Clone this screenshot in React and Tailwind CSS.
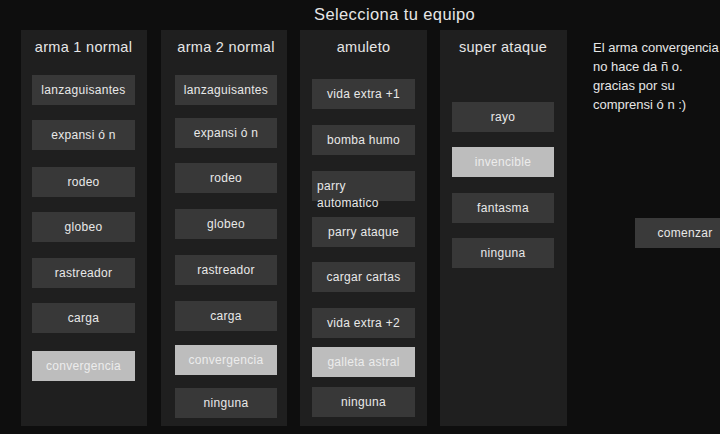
import React from "react";

const columns = [
  {
    title: "arma 1 normal",
    box: "ml-[21px] w-[126px] pl-[11px] pr-[12px]",
    items: [
      { label: "lanzaguisantes", mt: "mt-[9px]" },
      { label: "expansi ó n", mt: "mt-[15px]" },
      { label: "rodeo", mt: "mt-[17px]" },
      { label: "globeo", mt: "mt-[15px]" },
      { label: "rastreador", mt: "mt-[16px]" },
      { label: "carga", mt: "mt-[15px]" },
      { label: "convergencia", mt: "mt-[18px]", active: true },
    ],
  },
  {
    title: "arma 2 normal",
    box: "ml-[14px] w-[126px] pl-[14px] pr-[10px]",
    items: [
      { label: "lanzaguisantes", mt: "mt-[9px]" },
      { label: "expansi ó n", mt: "mt-[13px]" },
      { label: "rodeo", mt: "mt-[15px]" },
      { label: "globeo", mt: "mt-[16px]" },
      { label: "rastreador", mt: "mt-[16px]" },
      { label: "carga", mt: "mt-[16px]" },
      { label: "convergencia", mt: "mt-[14px]", active: true },
      { label: "ninguna", mt: "mt-[13px]" },
    ],
  },
  {
    title: "amuleto",
    box: "ml-[13px] w-[127px] pl-[12px] pr-[12px]",
    items: [
      { label: "vida extra +1", mt: "mt-[13px]" },
      { label: "bomba humo", mt: "mt-[16px]" },
      { label: "parry automatico", mt: "mt-[16px]", wrap: true },
      { label: "parry ataque", mt: "mt-[16px]" },
      { label: "cargar cartas", mt: "mt-[15px]" },
      { label: "vida extra +2", mt: "mt-[16px]" },
      { label: "galleta astral", mt: "mt-[9px]", active: true },
      { label: "ninguna", mt: "mt-[10px]" },
    ],
  },
  {
    title: "super ataque",
    box: "ml-[13px] w-[127px] pl-[12px] pr-[13px]",
    items: [
      { label: "rayo", mt: "mt-[36px]" },
      { label: "invencible", mt: "mt-[15px]", active: true },
      { label: "fantasma", mt: "mt-[16px]" },
      { label: "ninguna", mt: "mt-[15px]" },
    ],
  },
];

function Option({ item }) {
  if (item.wrap) {
    return (
      <div
        className={`${item.mt} h-[30px] shrink-0 bg-[#383838] pl-[5px] pr-[30px] pt-[7px] text-left text-[12px] leading-[17px] tracking-[0.3px] text-[#e8e8e8]`}
      >
        {item.label}
      </div>
    );
  }
  return (
    <div
      className={`${item.mt} flex h-[30px] shrink-0 items-center justify-center text-[12px] tracking-[0.3px] ${
        item.active ? "bg-[#bdbdbd] text-[#ececec]" : "bg-[#383838] text-[#e8e8e8]"
      }`}
    >
      {item.label}
    </div>
  );
}

export default function App() {
  return (
    <div className="h-[434px] w-[720px] overflow-hidden bg-[#0e0e0e] font-['Liberation_Sans',Arial,sans-serif]">
      <div className="flex h-[30px] items-center pl-[314px] pb-[2px] text-[16.5px] tracking-[0.4px] text-[#e6e6e6]">
        Selecciona tu equipo
      </div>
      <div className="flex flex-row">
        {columns.map((col) => (
          <div key={col.title} className={`flex h-[396px] shrink-0 flex-col bg-[#1f1f1f] ${col.box}`}>
            <div className="flex h-[36px] shrink-0 items-center justify-center text-[14.5px] tracking-[0.3px] text-[#e6e6e6]">
              {col.title}
            </div>
            {col.items.map((item) => (
              <Option key={item.label} item={item} />
            ))}
          </div>
        ))}
        <div className="ml-[26px] flex w-[140px] shrink-0 flex-col">
          <div className="mt-[8px] whitespace-nowrap text-[13px] leading-[19px] text-[#e6e6e6]">
            El arma convergencia
            <br />
            no hace da ñ o.
            <br />
            gracias por su
            <br />
            comprensi ó n :)
          </div>
          <div className="ml-[42px] mt-[104px] flex h-[30px] w-[100px] shrink-0 items-center justify-center bg-[#3a3a3a] text-[12px] tracking-[0.3px] text-[#e8e8e8]">
            comenzar
          </div>
        </div>
      </div>
    </div>
  );
}
